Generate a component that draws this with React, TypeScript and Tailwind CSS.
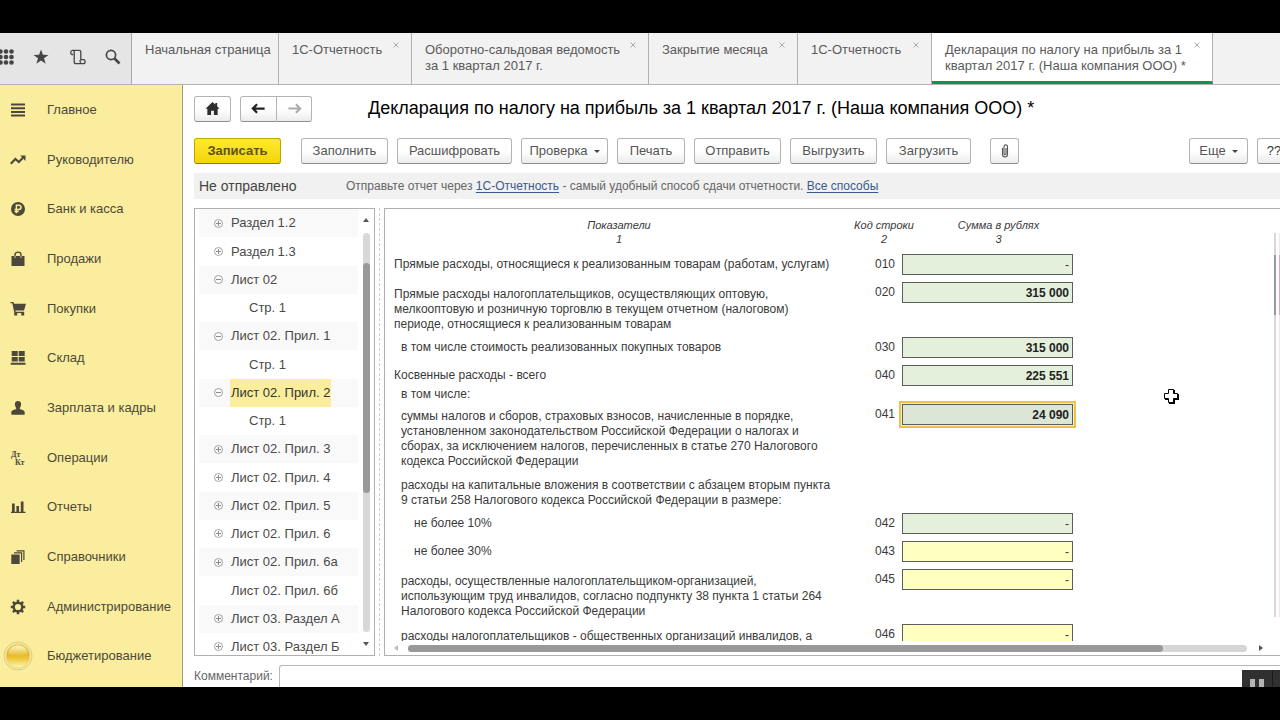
import { useState, type ReactNode } from "react";
import clsx from "clsx";

type Tab = { title: string; width: string; closable?: boolean; active?: boolean };
type TreeNode = { label: string; state?: "plus" | "minus"; child?: boolean };
type FormRow = {
  code?: string;
  text: string;
  note?: string;
  indent?: string;
  height: string;
  pad: string;
  value?: string;
  editable?: boolean;
};

const tabs: Tab[] = [
  { title: "Начальная страница", width: "w-[147px]" },
  { title: "1С-Отчетность", width: "w-[133px]", closable: true },
  { title: "Оборотно-сальдовая ведомость\nза 1 квартал 2017 г.", width: "w-[237px]", closable: true },
  { title: "Закрытие месяца", width: "w-[149px]", closable: true },
  { title: "1С-Отчетность", width: "w-[134px]", closable: true },
  { title: "Декларация по налогу на прибыль за 1\nквартал 2017 г. (Наша компания ООО) *", width: "w-[281px]", closable: true, active: true },
];

const tree: TreeNode[] = [
  { label: "Раздел 1.2", state: "plus" },
  { label: "Раздел 1.3", state: "plus" },
  { label: "Лист 02", state: "minus" },
  { label: "Стр. 1", child: true },
  { label: "Лист 02. Прил. 1", state: "minus" },
  { label: "Стр. 1", child: true },
  { label: "Лист 02. Прил. 2", state: "minus" },
  { label: "Стр. 1", child: true },
  { label: "Лист 02. Прил. 3", state: "plus" },
  { label: "Лист 02. Прил. 4", state: "plus" },
  { label: "Лист 02. Прил. 5", state: "plus" },
  { label: "Лист 02. Прил. 6", state: "plus" },
  { label: "Лист 02. Прил. 6а", state: "plus" },
  { label: "Лист 02. Прил. 6б" },
  { label: "Лист 03. Раздел А", state: "plus" },
  { label: "Лист 03. Раздел Б", state: "plus" },
];

const rows: FormRow[] = [
  { code: "010", text: "Прямые расходы, относящиеся к реализованным товарам (работам, услугам)", height: "h-[28px]", pad: "pt-[7px]", value: "-" },
  {
    code: "020",
    text: "Прямые расходы налогоплательщиков, осуществляющих оптовую,\nмелкооптовую и розничную торговлю в текущем отчетном (налоговом)\nпериоде, относящиеся к реализованным товарам",
    height: "h-[55px]",
    pad: "pt-[9px]",
    value: "315 000",
  },
  { code: "030", text: "в том числе стоимость реализованных покупных товаров", indent: "pl-[16px]", height: "h-[28px]", pad: "pt-[7px]", value: "315 000" },
  { code: "040", text: "Косвенные расходы - всего", note: "в том числе:", height: "h-[39px]", pad: "pt-[7px]", value: "225 551" },
  {
    code: "041",
    text: "суммы налогов и сборов, страховых взносов, начисленные в порядке,\nустановленном законодательством Российской Федерации о налогах и\nсборах, за исключением налогов, перечисленных в статье 270 Налогового\nкодекса Российской Федерации",
    indent: "pl-[16px]",
    height: "h-[78px]",
    pad: "pt-[9px]",
    value: "24 090",
  },
  {
    text: "расходы на капитальные вложения в соответствии с абзацем вторым пункта\n9 статьи 258 Налогового кодекса Российской Федерации в размере:",
    indent: "pl-[16px]",
    height: "h-[31px]",
    pad: "pt-0",
  },
  { code: "042", text: "не более 10%", indent: "pl-[29px]", height: "h-[28px]", pad: "pt-[7px]", value: "-" },
  { code: "043", text: "не более 30%", indent: "pl-[29px]", height: "h-[28px]", pad: "pt-[7px]", value: "-", editable: true },
  {
    code: "045",
    text: "расходы, осуществленные налогоплательщиком-организацией,\nиспользующим труд инвалидов, согласно подпункту 38 пункта 1 статьи 264\nНалогового кодекса Российской Федерации",
    indent: "pl-[16px]",
    height: "h-[55px]",
    pad: "pt-[9px]",
    value: "-",
    editable: true,
  },
  { code: "046", text: "расходы налогоплательщиков - общественных организаций инвалидов, а", indent: "pl-[16px]", height: "h-[28px]", pad: "pt-[9px]", value: "-", editable: true },
];

function Icon({ children, className = "size-4" }: { children: ReactNode; className?: string }) {
  return (
    <svg viewBox="0 0 16 16" className={className} fill="currentColor" aria-hidden="true">
      {children}
    </svg>
  );
}

const sections: { label: string; icon: ReactNode }[] = [
  { label: "Главное", icon: <Icon><path d="M1 1.500h14v2H1zM1 5.200h14v2H1zM1 8.900h14v2H1zM1 12.600h14v2H1z" /></Icon> },
  { label: "Руководителю", icon: <Icon><path d="M.8 11.8 5.4 7l3.4 3L13 5.7" fill="none" stroke="currentColor" strokeWidth="2.1" /><path d="M10.2 3.6h5.3v5.3z" /></Icon> },
  {
    label: "Банк и касса",
    icon: (
      <Icon>
        <circle cx="8" cy="8" r="7" />
        <path d="M6.4 12.2V4.2h2.5a2.1 2.1 0 0 1 0 4.3H4.6M4.6 10.4h4.2" fill="none" stroke="#fbed9e" strokeWidth="1.5" />
      </Icon>
    ),
  },
  { label: "Продажи", icon: <Icon><path d="M1.5 5h13v10h-13z" /><path d="M5 7V3.7C5 .2 11 .2 11 3.7V7" fill="none" stroke="currentColor" strokeWidth="1.4" /><path d="M5 5v2M11 5v2" stroke="#fbed9e" strokeWidth=".8" /></Icon> },
  { label: "Покупки", icon: <Icon><path d="M.5 1h2.8l.8 1.8H16l-2 6.6H5.4l.3 1.4h8.5v1.3H4.4L2.3 2.3H.5z" /><path d="M4.2 12h3v2.6h-3zM11.2 12h3v2.6h-3z" /></Icon> },
  { label: "Склад", icon: <Icon><path d="M1.7 1h6v4.9h-6zM8.7 1h6v4.9h-6zM1.7 6.9h6v4.7h-6zM8.7 6.9h6v4.7h-6zM.7 12.8h14.8v1.9H.7z" /></Icon> },
  { label: "Зарплата и кадры", icon: <Icon><path d="M8 1c2.2 0 3.2 1.5 3.1 3.5C11 6.500 9.800 7.800 9.700 8.300c0 .8.800 1.200 2.800 1.700 1.700.4 2.200 1.400 2.200 2.700v1.200c0 .6-.4.9-.9.9H2.200c-.5 0-.9-.3-.9-.9v-1.200c0-1.300.5-2.300 2.200-2.700 2-.5 2.800-.9 2.800-1.700C6.200 7.800 5 6.500 4.900 4.500 4.800 2.500 5.800 1 8 1z" /></Icon> },
  {
    label: "Операции",
    icon: (
      <Icon>
        <text x="1" y="7" fontSize="8" fontWeight="bold" fontFamily="Liberation Serif, serif">Дт</text>
        <text x="5" y="15" fontSize="8" fontWeight="bold" fontFamily="Liberation Serif, serif">Кт</text>
      </Icon>
    ),
  },
  { label: "Отчеты", icon: <Icon><path d="M2 4.500h2.700V13H2zM6.400 7H9v6H6.400zM10.800 2.500h2.700V13h-2.700zM1 12.800h14.500v1.300H1z" /></Icon> },
  { label: "Справочники", icon: <Icon><path d="M1.300 5.500h8.400v9.500H1.300z" /><path d="M4 3.800h7.600V13M6.600 1.800h7.300v9.300" fill="none" stroke="currentColor" strokeWidth="1.200" /></Icon> },
  {
    label: "Администрирование",
    icon: (
      <Icon>
        <circle cx="8" cy="8" r="4.300" fill="none" stroke="currentColor" strokeWidth="2.400" />
        <path d="M8 .8v3M8 12.200v3M.8 8h3M12.200 8h3M2.900 2.900l2.100 2.100M11 11l2.100 2.100M2.900 13.100 5 11M11 5l2.100-2.100" stroke="currentColor" strokeWidth="2.500" />
      </Icon>
    ),
  },
  {
    label: "Бюджетирование",
    icon: (
      <svg viewBox="0 0 30 30" className="size-[30px]" aria-hidden="true">
        <defs>
          <linearGradient id="coin" x1="0" y1="0" x2="0" y2="1">
            <stop offset="0" stopColor="#f0cf52" />
            <stop offset=".4" stopColor="#e2b21c" />
            <stop offset=".6" stopColor="#edc638" />
            <stop offset="1" stopColor="#fff8b8" />
          </linearGradient>
          <linearGradient id="gloss" x1="0" y1="0" x2="0" y2="1">
            <stop offset="0" stopColor="#fffbe0" stopOpacity=".85" />
            <stop offset="1" stopColor="#fff3b0" stopOpacity=".15" />
          </linearGradient>
        </defs>
        <circle cx="15" cy="15" r="14" fill="#f8eaa8" stroke="#decb7d" />
        <circle cx="15" cy="15" r="12" fill="url(#coin)" stroke="#ecd679" />
        <path d="M5 13.500C6 1.500 24 1.500 25 13.500Q15 16 5 13.500z" fill="url(#gloss)" />
      </svg>
    ),
  },
];

const buttonBase =
  "flex h-[26px] shrink-0 items-center justify-center rounded-[3px] border border-[#b4b4b4] border-b-[#8f8f8f] bg-linear-to-b from-white from-50% to-[#ececec] text-[13px] text-[#555]";

function ToolButton({ width, menu, children }: { width: string; menu?: boolean; children: ReactNode }) {
  return (
    <button type="button" className={clsx(buttonBase, width)}>
      {children}
      {menu ? <span className="ml-[6px] border-x-[3px] border-t-[3px] border-x-transparent border-t-[#444]" /> : null}
    </button>
  );
}

function TopBar() {
  return (
    <header className="flex h-[52px] shrink-0 border-b border-[#b3b3b3] bg-[#f2f2f2]">
      <div className="flex w-[132px] shrink-0 items-center border-r border-[#a8a8a8] bg-[#e5e5e5] pb-1 text-[#454545]">
        <button type="button" aria-label="Меню" className="w-[33px]">
          <svg viewBox="0 0 14 16" className="h-4 w-[14px]" fill="currentColor">
            {[2.5, 8, 13.5].map((y) => [0.5, 6, 11.5].map((x) => <circle key={`${x}-${y}`} cx={x} cy={y} r="2.300" />))}
          </svg>
        </button>
        <button type="button" aria-label="Избранное" className="w-[37px]">
          <Icon><path d="m8 .5 1.900 5.300 5.600.1-4.500 3.400 1.600 5.500L8 11.600l-4.600 3.200L5 9.300.5 5.900l5.600-.1z" /></Icon>
        </button>
        <button type="button" aria-label="История" className="w-[35px]">
          <svg viewBox="0 0 16 16" className="size-4" fill="none" stroke="currentColor" strokeWidth="1.300">
            <path d="M3.200 5.500H1.800C.3 5.500.3 1.300 2.400 1.300h6.800c1 0 1.600.6 1.600 1.700v7.700h2.700c2.200 0 2.200 4-.2 4H6.200c-1.400 0-2-.8-2-2V3.200c0-1.100-.6-1.900-1.600-1.900M10.800 10.700c-1.300.7-.9 2.600.4 2.600" />
          </svg>
        </button>
        <button type="button" aria-label="Поиск">
          <Icon><circle cx="6" cy="6" r="4.600" fill="none" stroke="currentColor" strokeWidth="1.700" /><path d="m9.500 9.500 5 5" stroke="currentColor" strokeWidth="2.600" /></Icon>
        </button>
      </div>
      <nav className="flex min-w-0 flex-1 overflow-hidden">
        {tabs.map((tab, index) => (
          <div key={index} className={clsx("relative shrink-0 border-r border-[#b0b0b0] pt-[9px] pl-[13px]", tab.width, tab.active && "border-b-[3px] border-b-[#159150] bg-white")}>
            <button type="button" className="block text-left text-[13px] leading-4 whitespace-pre text-[#5a5a5a]">{tab.title}</button>
            {tab.closable ? (
              <button type="button" aria-label="Закрыть" className="absolute top-[9px] right-3">
                <svg viewBox="0 0 6 6" className="size-[6px]" stroke="#aaa"><path d="m.5.5 5 5M5.500.5l-5 5" /></svg>
              </button>
            ) : null}
          </div>
        ))}
      </nav>
    </header>
  );
}

function Sidebar() {
  return (
    <nav className="flex w-[183px] shrink-0 flex-col border-r border-[#a39c6e] bg-[#fbed9e] pb-[6px]">
      {sections.map((section) => (
        <a key={section.label} href="#" className="flex flex-1 items-center text-[13px] text-[#4d4939]">
          <span className="flex w-[36px] justify-center text-[#4c483a]">{section.icon}</span>
          <span className="pl-[11px] whitespace-nowrap">{section.label}</span>
        </a>
      ))}
    </nav>
  );
}

function Tree() {
  const [selected, setSelected] = useState(6);

  return (
    <div className="flex w-[181px] shrink-0 overflow-hidden border border-[#b0b0b0] bg-white">
      <ul className="flex h-[452px] flex-1 flex-col pl-1">
        {tree.map((node, index) => (
          <li key={index} className={clsx("flex flex-1 items-center", index % 2 === 0 && "bg-[#f9f9f9]")}>
            <span className="flex w-[31px] shrink-0 justify-center pl-2">
              {node.state ? (
                <svg viewBox="0 0 9 9" className="size-[9px]" fill="none" stroke="#8c8c8c">
                  <circle cx="4.500" cy="4.500" r="4" strokeWidth=".8" />
                  <path d={node.state === "plus" ? "M2 4.500h5M4.500 2v5" : "M2 4.500h5"} />
                </svg>
              ) : null}
            </span>
            <button
              type="button"
              onClick={() => setSelected(index)}
              className={clsx("h-full px-px text-left text-[13px] whitespace-nowrap text-[#4a4a4a]", node.child && "ml-[18px]", index === selected && "bg-[#faee9c] text-[#333]")}
            >
              {node.label}
            </button>
          </li>
        ))}
      </ul>
      <div className="flex w-4 shrink-0 flex-col items-center py-[9px]">
        <span className="border-x-[3px] border-b-[4px] border-x-transparent border-b-[#555]" />
        <div className="mt-[11px] mb-[10px] w-[7px] flex-1 rounded-full bg-[#d8d8d8] pt-[30px]">
          <div className="h-[230px] rounded-full bg-[#999]" />
        </div>
        <span className="border-x-[3px] border-t-[4px] border-x-transparent border-t-[#555]" />
      </div>
    </div>
  );
}

function DeclarationForm() {
  return (
    <div className="relative flex min-w-0 flex-1 flex-col border border-r-0 border-[#b0b0b0] bg-white">
      <div className="flex min-h-0 flex-1">
        <div className="min-w-0 flex-1 overflow-hidden">
          <table className="w-[688px] table-fixed border-collapse text-[12px] text-[#3a3a3a]">
            <colgroup>
              <col className="w-[459px]" />
              <col className="w-[58px]" />
              <col className="w-[22px]" />
              <col className="w-[149px]" />
            </colgroup>
            <thead>
              <tr className="h-[41px] text-center align-top text-[11px] leading-[14px] italic">
                <th scope="col" className="pt-[9px] pl-[9px] font-normal">Показатели<br />1</th>
                <th scope="col" colSpan={2} className="pt-[9px] font-normal">Код строки<br />2</th>
                <th scope="col" className="pt-[9px] font-normal">Сумма в рублях<br />3</th>
              </tr>
            </thead>
            <tbody>
              {rows.map((row, index) => (
                <tr key={index} className={clsx("align-top", row.height)}>
                  <td className={clsx("leading-[15px] whitespace-pre", row.pad, row.indent ?? "pl-[9px]")}>
                    {row.code ? <label htmlFor={`line-${row.code}`} className="block">{row.text}</label> : row.text}
                    {row.note ? <p className="mt-[5px] pl-[7px] leading-3">{row.note}</p> : null}
                  </td>
                  <td className="pt-1 pr-[7px] text-right leading-5">{row.code}</td>
                  <td colSpan={2} className="pt-1">
                    {row.code ? (
                      <input
                        id={`line-${row.code}`}
                        defaultValue={row.value}
                        className={clsx(
                          "block h-[21px] w-full border border-[#5c5f58] pr-[3px] text-right outline-none",
                          row.value === "-" ? "font-normal" : "font-bold text-[#222]",
                          row.editable ? "bg-[#ffffc0]" : row.code === "041" ? "bg-[#dce6d6]" : "bg-[#e5f0dc]",
                          row.code === "041" && "ring-2 ring-[#ecc348] ring-offset-1 ring-offset-[#f9eec0]",
                        )}
                      />
                    ) : null}
                  </td>
                </tr>
              ))}
            </tbody>
          </table>
        </div>
        <div className="flex w-[6px] shrink-0 justify-between pt-6 pb-6">
          <div className="w-[2px] bg-[#d8d8d8] pt-[22px]"><div className="h-[60px] bg-[#999]" /></div>
          <div className="w-px bg-[#f3e4e6] pt-[22px]"><div className="h-[60px] bg-[#e3a5ad]" /></div>
        </div>
      </div>
      <div className="flex h-[14px] shrink-0 items-center pr-[17px] pl-[9px]">
        <span className="border-y-[3px] border-r-[4px] border-y-transparent border-r-[#bbb]" />
        <div className="mr-3 ml-[10px] h-[7px] flex-1 rounded-full bg-[#d6d6d6]">
          <div className="h-full w-[90%] rounded-full bg-[#999]" />
        </div>
        <span className="border-y-[3px] border-l-[4px] border-y-transparent border-l-[#555]" />
      </div>
      <svg viewBox="0 0 16 16" className="absolute top-[179px] left-[778px] size-4" aria-hidden="true">
        <path d="M6 2h6v4h4v6h-4v4H6v-4H2V6h4z" fill="#000" />
        <path d="M5.500 1.500h5v4h4v5h-4v4h-5v-4h-4v-5h4z" fill="#fff" stroke="#000" />
      </svg>
    </div>
  );
}

export default function App() {
  return (
    <div className="flex h-screen flex-col overflow-hidden bg-black py-[33px] font-['Liberation_Sans',Arial,sans-serif]">
      <div className="relative flex min-h-0 flex-1 flex-col overflow-hidden bg-white">
        <TopBar />
        <div className="flex min-h-0 flex-1">
          <Sidebar />
          <main className="flex min-w-0 flex-1 flex-col pt-[11px] pl-[11px]">
            <div className="flex h-[25px] shrink-0 items-center">
              <button type="button" aria-label="Домой" className={clsx(buttonBase, "w-[37px]")}>
                <Icon className="size-[15px]"><path d="M8 1 .5 8.200h2V15h4v-4.500h3V15h4V8.200h2L13 5.700V2h-2v1.800z" fill="#2e2e2e" /></Icon>
              </button>
              <div className="ml-[9px] flex">
                <button type="button" aria-label="Назад" className={clsx(buttonBase, "w-[37px] rounded-r-none")}>
                  <Icon className="size-[15px]"><path d="M6.500 3.500 2 8l4.500 4.500M2 8h12.500" fill="none" stroke="#222" strokeWidth="2.400" /></Icon>
                </button>
                <button type="button" aria-label="Вперед" className={clsx(buttonBase, "w-[35px] rounded-l-none border-l-0")}>
                  <Icon className="size-[15px]"><path d="M9.500 3.500 14 8l-4.500 4.500M14 8H1.500" fill="none" stroke="#aaa" strokeWidth="2.200" /></Icon>
                </button>
              </div>
              <h1 className="ml-[56px] text-[18px] whitespace-nowrap text-black">Декларация по налогу на прибыль за 1 квартал 2017 г. (Наша компания ООО) *</h1>
            </div>

            <div className="mt-[17px] flex shrink-0 items-center gap-[9px]">
              <button type="button" className="mr-[11px] flex h-[26px] w-[87px] items-center justify-center rounded-[3px] border border-[#c0a400] border-b-[#8f7c10] bg-linear-to-b from-[#ffe92e] to-[#f2d500] text-[13px] font-bold text-[#5f5310]">Записать</button>
              <ToolButton width="w-[87px]">Заполнить</ToolButton>
              <ToolButton width="w-[115px]">Расшифровать</ToolButton>
              <ToolButton width="w-[87px]" menu>Проверка</ToolButton>
              <ToolButton width="w-[68px]">Печать</ToolButton>
              <ToolButton width="w-[87px]">Отправить</ToolButton>
              <ToolButton width="w-[87px]">Выгрузить</ToolButton>
              <ToolButton width="w-[85px]">Загрузить</ToolButton>
              <button type="button" aria-label="Файлы" className={clsx(buttonBase, "ml-[10px] w-[29px]")}>
                <svg viewBox="0 0 8 14" className="h-[14px] w-2" fill="none" stroke="#555" strokeWidth="1.100">
                  <path d="M1.500 4v6c0 4 5 4 5 0V3c0-3-3.500-3-3.500 0v6.500c0 1.500 2 1.500 2 0V4" />
                </svg>
              </button>
              <div className="flex-1" />
              <ToolButton width="w-[59px]" menu>Еще</ToolButton>
              <button type="button" aria-label="Справка" className={clsx(buttonBase, "w-[23px] overflow-hidden rounded-r-none border-r-0")}>
                <span className="pl-[10px] text-[#333]">??</span>
              </button>
            </div>

            <div className="mt-[9px] flex h-[26px] shrink-0 items-center bg-[#f1f1f1] pl-[5px]">
              <span className="w-[147px] text-[14px] text-[#444]">Не отправлено</span>
              <p className="text-[12px] text-[#666]">
                Отправьте отчет через <a href="#" className="text-[#3a5a8c] underline underline-offset-2">1С-Отчетность</a> - самый удобный способ сдачи отчетности.{" "}
                <a href="#" className="text-[#3a5a8c] underline underline-offset-2">Все способы</a>
              </p>
            </div>

            <div className="mt-[9px] flex min-h-0 flex-1">
              <Tree />
              <div className="mr-1 w-[5px] border-r border-dashed border-[#d0d0d0]" />
              <DeclarationForm />
            </div>

            <div className="mt-[9px] flex h-[22px] shrink-0 items-center">
              <label htmlFor="comment" className="w-[85px] shrink-0 text-[12px] text-[#666]">Комментарий:</label>
              <input id="comment" className="h-full min-w-0 flex-1 rounded-tl-[3px] border-t border-l border-[#b8b8b8] px-2 text-[13px] outline-none" />
            </div>
          </main>
        </div>
        <button type="button" aria-label="Пауза" className="absolute right-0 bottom-0 flex h-[17px] w-[38px] bg-[#303030]">
          <span className="flex h-full w-[31px] items-end gap-1 border-r border-[#1c1c1c] pl-2">
            <span className="h-2 w-[5px] bg-[#b5b5b5]" />
            <span className="h-2 w-[5px] bg-[#b5b5b5]" />
          </span>
        </button>
      </div>
    </div>
  );
}
